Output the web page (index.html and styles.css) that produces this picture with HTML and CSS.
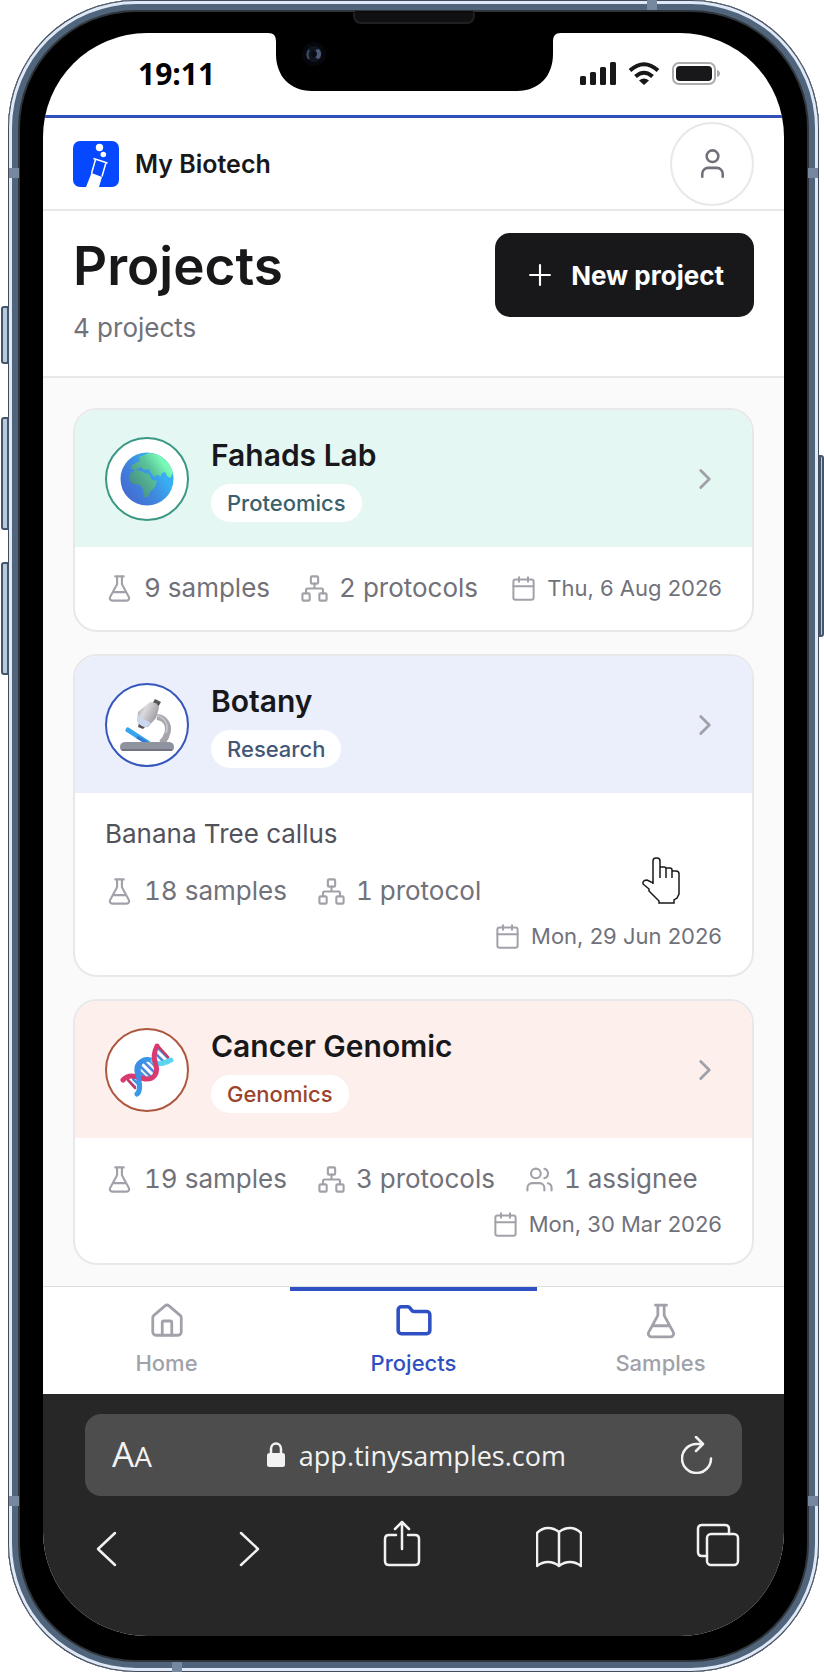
FILE: index.html
```html
<!DOCTYPE html>
<html lang="en">
<head>
<meta charset="utf-8">
<meta name="viewport" content="width=device-width, initial-scale=1">
<title>My Biotech – Projects</title>
<link rel="stylesheet" href="styles.css">
</head>
<body>
<svg class="sprite" aria-hidden="true">
  <symbol id="flask" viewBox="0 0 24 24"><path d="M14 2v6a2 2 0 0 0 .245.96l5.51 10.08A2 2 0 0 1 18 22H6a2 2 0 0 1-1.755-2.96l5.51-10.08A2 2 0 0 0 10 8V2M6.453 15h11.094M8.5 2h7"/></symbol>
  <symbol id="network" viewBox="0 0 24 24"><rect x="16" y="16" width="6" height="6" rx="1"/><rect x="2" y="16" width="6" height="6" rx="1"/><rect x="9" y="2" width="6" height="6" rx="1"/><path d="M5 16v-3a1 1 0 0 1 1-1h12a1 1 0 0 1 1 1v3M12 12V8"/></symbol>
  <symbol id="calendar" viewBox="0 0 24 24"><rect x="3" y="4" width="18" height="18" rx="2"/><path d="M8 2v4M16 2v4M3 10h18"/></symbol>
  <symbol id="users" viewBox="0 0 24 24"><circle cx="9" cy="7" r="4"/><path d="M16 21v-2a4 4 0 0 0-4-4H6a4 4 0 0 0-4 4v2M22 21v-2a4 4 0 0 0-3-3.87M16 3.13a4 4 0 0 1 0 7.75"/></symbol>
  <symbol id="chevron" viewBox="0 0 24 24"><path d="m9 18 6-6-6-6"/></symbol>
</svg>

<div class="phone">
  <span class="side-key key-mute"></span>
  <span class="side-key key-up"></span>
  <span class="side-key key-down"></span>
  <span class="side-key key-power"></span>
  <span class="band band-left-top"></span>
  <span class="band band-right-top"></span>
  <span class="band band-left-bottom"></span>
  <span class="band band-right-bottom"></span>
  <span class="band band-top"></span>
  <span class="band band-bottom"></span>
  <span class="speaker"></span>

  <div class="screen">
    <svg class="notch" viewBox="0 0 293 58" aria-hidden="true">
      <path d="M0 0C6 0 8 3 8 9v12c0 22 14 37 36 37h205c22 0 36-15 36-37V9c0-6 2-9 8-9z"/>
      <circle cx="46" cy="21" r="12" fill="#06070c"/>
      <circle cx="46" cy="21" r="8" fill="#10141f"/>
      <path d="M41 17c-2 3-2 6 0 9" fill="none" stroke="#3c4c66" stroke-width="2"/>
      <ellipse cx="50" cy="21" rx="3" ry="5" fill="#4a5a78"/>
      <circle cx="46" cy="21" r="3" fill="#0a0c14"/>
    </svg>

    <div class="status">
      <span class="clock">19:11</span>
      <div class="signals">
        <svg width="36" height="24" viewBox="0 0 36 24" fill="#18181b" aria-hidden="true"><rect x="0" y="14" width="6" height="9" rx="1.5"/><rect x="10" y="10" width="6" height="13" rx="1.5"/><rect x="20" y="5" width="6" height="18" rx="1.5"/><rect x="30" y="0" width="6" height="23" rx="1.5"/></svg>
        <svg width="32" height="24" viewBox="0 0 32 24" fill="none" stroke="#18181b" stroke-width="4" aria-hidden="true"><path d="M2 8.500Q16-4 30 8.500M7.500 14.500Q16 7 24.500 14.500"/><path d="M11 18.500q5-4 10 0L16 23z" fill="#18181b" stroke="none"/></svg>
        <svg width="48" height="24" viewBox="0 0 48 24" aria-hidden="true"><rect x="1" y="1" width="42" height="21" rx="6" fill="#fff" stroke="#adadb0" stroke-width="2"/><rect x="4" y="4" width="36" height="15" rx="4" fill="#18181b"/><path d="M45 8q3 1 3 3.500T45 15z" fill="#adadb0"/></svg>
      </div>
    </div>

    <header class="topbar">
      <a class="brand" href="#">
        <svg width="46" height="46" viewBox="0 0 46 46" aria-hidden="true">
          <rect width="46" height="46" rx="7" fill="#0548ff"/>
          <circle cx="26.500" cy="6.500" r="3.700" fill="#fff"/><circle cx="30.300" cy="13.500" r="2.800" fill="#fff"/>
          <path d="M20.500 17.500l14 4.500M22.500 18.500l-4 14M33 21.500l-4 14" fill="none" stroke="#fff" stroke-width="1.500"/>
          <path d="M18.500 32l10.500 4-3 10H13z" fill="#fff"/>
        </svg>
        <span>My Biotech</span>
      </a>
      <button class="profile" type="button" aria-label="Account">
        <svg class="icon" width="35" height="35" viewBox="0 0 24 24"><circle cx="12" cy="7" r="4"/><path d="M19 21v-2a4 4 0 0 0-4-4H9a4 4 0 0 0-4 4v2"/></svg>
      </button>
    </header>

    <section class="page-head">
      <div>
        <h1>Projects</h1>
        <p>4 projects</p>
      </div>
      <button class="new-project" type="button">
        <svg class="icon" width="34" height="34" viewBox="0 0 24 24"><path d="M5 12h14M12 5v14"/></svg>
        <span>New project</span>
      </button>
    </section>

    <main class="list">
      <article class="card teal">
        <a class="card-head" href="#">
          <span class="avatar">
            <svg width="54" height="54" viewBox="0 0 54 54" aria-hidden="true">
              <defs>
                <linearGradient id="sea" x1="0" y1="1" x2="1" y2="0.300"><stop offset="0" stop-color="#4560cc"/><stop offset="0.500" stop-color="#3f86de"/><stop offset="0.800" stop-color="#38aff2"/></linearGradient>
                <linearGradient id="land" x1="0" y1="0.700" x2="1" y2="0"><stop offset="0" stop-color="#458c82"/><stop offset="0.500" stop-color="#5cc59b"/><stop offset="0.750" stop-color="#79f9b6"/></linearGradient>
              </defs>
              <circle cx="27" cy="27" r="26.500" fill="url(#sea)"/>
              <path d="M24 3l5-2c12 0 21 9 24 20l-3 5-3-2-2-4-3 1-1 3-4-1-3 2-3-4-2-4-5 1-3-3-5 3-5-1 1-4 6-3 2-2-1-3zM10 22l5-4 6 1 4 2 4 1 3 6 5 1-2 6-5 5-2 5-4 0-1-7-3-5-7-1-4-4z" fill="url(#land)"/>
            </svg>
          </span>
          <span class="heading"><strong>Fahads Lab</strong><em>Proteomics</em></span>
          <svg class="icon go" width="34" height="34"><use href="#chevron"/></svg>
        </a>
        <div class="card-body">
          <ul class="meta">
            <li><svg class="icon"><use href="#flask"/></svg>9 samples</li>
            <li><svg class="icon"><use href="#network"/></svg>2 protocols</li>
            <li class="date"><svg class="icon"><use href="#calendar"/></svg><time datetime="2026-08-06">Thu, 6 Aug 2026</time></li>
          </ul>
        </div>
      </article>

      <article class="card blue">
        <a class="card-head" href="#">
          <span class="avatar">
            <svg width="54" height="54" viewBox="0 0 54 54" aria-hidden="true">
              <defs><linearGradient id="tube" x1="0" y1="0" x2="1" y2="0.600"><stop offset="0" stop-color="#8f8d92"/><stop offset="0.400" stop-color="#dcdadd"/><stop offset="1" stop-color="#96949a"/></linearGradient></defs>
              <path d="M37 19c9 1 13 9 10 17-1 4-3 7-6 9" fill="none" stroke="#a7a5ab" stroke-width="6"/>
              <path d="M37 18c8 1 12 9 9 17" fill="none" stroke="#c5c3c8" stroke-width="2"/>
              <path d="M8 32l20 13" stroke="#38a6ee" stroke-width="5" stroke-linecap="round"/>
              <path d="M17 39l12 7" stroke="#3478d5" stroke-width="3"/>
              <path d="M35 1l6 3-3 5-6-3zM19 25l7 3-3 3-5-2z" fill="#565459"/>
              <path d="M30 4q8 0 9 6l-3 10-8 9q-7 1-11-6l1-9z" fill="url(#tube)"/>
              <path d="M18 18l13 7-4 4q-6 0-10-6z" fill="#cbd8ee"/>
              <path d="M0 49q0-5 6-5h42q6 0 6 5 0 4-3 4H3q-3 0-3-4z" fill="#8f929f"/><path d="M2 52h50" stroke="#737580" stroke-width="2"/>
            </svg>
          </span>
          <span class="heading"><strong>Botany</strong><em>Research</em></span>
          <svg class="icon go" width="34" height="34"><use href="#chevron"/></svg>
        </a>
        <div class="card-body">
          <p class="note">Banana Tree callus</p>
          <ul class="meta">
            <li><svg class="icon"><use href="#flask"/></svg>18 samples</li>
            <li><svg class="icon"><use href="#network"/></svg>1 protocol</li>
            <li class="date"><svg class="icon"><use href="#calendar"/></svg><time datetime="2026-06-29">Mon, 29 Jun 2026</time></li>
          </ul>
        </div>
        <svg class="pointer" width="38" height="48" viewBox="0 0 38 48" aria-hidden="true"><path d="M11 27V4q0-3 3-3h1q3 0 3 3v17M18 10h4q2 0 2 2v9M24 11h4q2 0 2 2v8M30 14h4q3 0 3 3v20l-2 4-3 2v3H17v-2L7 34v-2l-6-5v-2q1-2 4-2l4 2q2 0 2 2" fill="none" stroke="#18181b" stroke-width="1.500"/></svg>
      </article>

      <article class="card coral">
        <a class="card-head" href="#">
          <span class="avatar">
            <svg width="54" height="54" viewBox="0 0 54 54" fill="none" stroke-width="5" stroke-linecap="round" aria-hidden="true">
              <path d="M8 37l7 7M13 36l5 5M23 18l13 13M20 23l11 11M19 28l7 7M28 16l10 10M39 6l9 9M36 11l7 7" stroke="#4b8de0" stroke-width="2.500"/>
              <path d="M39 4l9 10M8 37l7 8" stroke="#c8385f" stroke-width="2.500"/>
              <path d="M17 51c7-6-3-22 3-31 5-6 12-3 15-1" stroke="#3a98e8"/>
              <path d="M33 18c6 5 11 2 18-1" stroke="#5fd4f0"/>
              <path d="M3 37c7-8 16-2 22-1 9 1 13-6 11-13-3-9-2-14 1-20" stroke="#d93a72"/>
              <path d="M19 35c-3-7-3-13 2-16" stroke="#3f8fe6"/>
            </svg>
          </span>
          <span class="heading"><strong>Cancer Genomic</strong><em>Genomics</em></span>
          <svg class="icon go" width="34" height="34"><use href="#chevron"/></svg>
        </a>
        <div class="card-body">
          <ul class="meta">
            <li><svg class="icon"><use href="#flask"/></svg>19 samples</li>
            <li><svg class="icon"><use href="#network"/></svg>3 protocols</li>
            <li><svg class="icon"><use href="#users"/></svg>1 assignee</li>
            <li class="date"><svg class="icon"><use href="#calendar"/></svg><time datetime="2026-03-30">Mon, 30 Mar 2026</time></li>
          </ul>
        </div>
      </article>
    </main>

    <nav class="tabs" aria-label="Main">
      <a href="#"><svg class="icon" width="38" height="38" viewBox="0 0 24 24"><path d="M15 21v-8a1 1 0 0 0-1-1h-4a1 1 0 0 0-1 1v8"/><path d="M3 10a2 2 0 0 1 .709-1.528l7-5.999a2 2 0 0 1 2.582 0l7 5.999A2 2 0 0 1 21 10v9a2 2 0 0 1-2 2H5a2 2 0 0 1-2-2z"/></svg>Home</a>
      <a href="#" class="active" aria-current="page"><svg class="icon" width="38" height="38" viewBox="0 0 24 24"><path d="M20 20a2 2 0 0 0 2-2V8a2 2 0 0 0-2-2h-7.900a2 2 0 0 1-1.690-.900L9.600 3.900A2 2 0 0 0 7.930 3H4a2 2 0 0 0-2 2v13a2 2 0 0 0 2 2Z"/></svg>Projects</a>
      <a href="#"><svg class="icon" width="38" height="38"><use href="#flask"/></svg>Samples</a>
    </nav>

    <footer class="browser">
      <div class="address">
        <button class="text-size" type="button" aria-label="Text size"><span>A</span><small>A</small></button>
        <span class="url">
          <svg width="18" height="26" viewBox="0 0 18 26" aria-hidden="true"><rect x="0" y="11" width="18" height="14" rx="2.500" fill="#f2f2f2"/><path d="M4 12V7a5 5.500 0 0 1 10 0v5" fill="none" stroke="#f2f2f2" stroke-width="2.500"/></svg>
          app.tinysamples.com
        </span>
        <button type="button" aria-label="Reload"><svg class="icon" width="32" height="38" viewBox="0 0 32 38"><path d="M30 22.500A14.500 14.500 0 1 1 15.500 8H22M15 1l7 7-7 7"/></svg></button>
      </div>
      <div class="toolbar">
        <button type="button" aria-label="Back"><svg class="icon" width="28" height="48" viewBox="0 0 28 48"><path d="M22 13L5 29l17 16"/></svg></button>
        <button type="button" aria-label="Forward"><svg class="icon" width="28" height="48" viewBox="0 0 28 48"><path d="M6 13l17 16L6 45"/></svg></button>
        <button type="button" aria-label="Share"><svg class="icon" width="44" height="48" viewBox="0 0 44 48"><path d="M18 15h-7q-4 0-4 4v22q0 4 4 4h26q4 0 4-4V19q0-4-4-4h-7M24 29V2M17 9l7-7 7 7"/></svg></button>
        <button type="button" aria-label="Bookmarks"><svg class="icon" width="46" height="48" viewBox="0 0 46 48"><path d="M23 46V12Q18 8 12 8T1 13v33q5-4 11-4t11 4q5-4 11-4t11 4V13q-5-5-11-5T23 12"/></svg></button>
        <button type="button" aria-label="Tabs"><svg class="icon" width="44" height="48" viewBox="0 0 44 48"><rect x="11" y="14" width="31" height="31" rx="4"/><path d="M11 36H6q-4 0-4-4V9q0-4 4-4h23q4 0 4 4v5"/></svg></button>
      </div>
    </footer>
  </div>
</div>
</body>
</html>
```

FILE: styles.css
```css
* { box-sizing: border-box; }

body {
  margin: 0;
  padding: 0 5px 0 8px;
  background: #fff;
  color: #18181b;
  font-family: Inter, "Liberation Sans", sans-serif;
  font-size: 26px;
}

h1, p, ul { margin: 0; padding: 0; }
a { color: inherit; text-decoration: none; }
button { margin: 0; padding: 0; border: 0; background: none; color: inherit; font: inherit; }
svg { display: block; flex: none; }
.sprite { position: absolute; width: 0; height: 0; }
.icon { fill: none; stroke: currentColor; stroke-width: 1.75; stroke-linecap: round; stroke-linejoin: round; }

/* Device */
.phone {
  position: relative;
  padding: 33px 35px 36px;
  border-radius: 128px;
  background: #000;
  box-shadow: inset 0 0 0 1px #424b59, inset 0 0 0 4px #dfe8f7, inset 0 0 0 10px #50657c, inset 0 0 0 12px #30353c;
}
.side-key {
  position: absolute;
  left: -7px;
  width: 8px;
  border: 2px solid #43566b;
  border-radius: 3px 0 0 3px;
  background: #b9c9d8;
}
.key-mute { top: 306px; height: 58px; }
.key-up { top: 417px; height: 113px; }
.key-down { top: 562px; height: 113px; }
.key-power { top: 455px; right: -5px; left: auto; width: 5px; height: 182px; border-radius: 0 3px 3px 0; }
.band { position: absolute; width: 10px; height: 10px; background: #7688a0; }
.band-left-top { top: 168px; left: 1px; }
.band-right-top { top: 168px; right: 1px; }
.band-left-bottom { bottom: 166px; left: 1px; }
.band-right-bottom { bottom: 166px; right: 1px; }
.band-top { top: 0; right: 162px; }
.band-bottom { bottom: 0; left: 164px; }
.speaker {
  position: absolute;
  top: 11px;
  left: 50%;
  width: 122px;
  height: 13px;
  margin-left: -61px;
  border: 2px solid #202022;
  border-top-color: #0c0c0e;
  border-radius: 4px 4px 8px 8px;
  background: #101012;
}
.screen { position: relative; overflow: hidden; border-radius: 104px; background: #fff; }
.notch { position: absolute; top: 0; left: 50%; width: 293px; height: 58px; margin-left: -146px; }

.status {
  display: flex;
  align-items: center;
  justify-content: space-between;
  height: 85px;
  padding: 0 64px 0 95px;
  border-bottom: 3px solid #2f4fbb;
}
.clock { color: #000; font: bold 30px/40px "Open Sans", sans-serif; }
.signals { display: flex; gap: 12px; }

/* App header */
.topbar {
  display: flex;
  align-items: center;
  justify-content: space-between;
  height: 93px;
  padding: 0 30px;
  border-bottom: 2px solid #e8e8ea;
}
.brand { display: flex; align-items: center; gap: 16px; font-size: 25px; font-weight: 600; }
.profile {
  display: grid;
  place-items: center;
  width: 84px;
  height: 84px;
  border: 2px solid #e8e8ea;
  border-radius: 50%;
  color: #71717a;
}

.page-head {
  display: flex;
  align-items: flex-start;
  justify-content: space-between;
  padding: 22px 30px 29px;
  border-bottom: 2px solid #e8e8ea;
}
.page-head h1 { font-size: 53px; font-weight: 600; line-height: 66px; }
.page-head p { margin-top: 10px; color: #71717a; line-height: 38px; }
.new-project {
  display: flex;
  align-items: center;
  gap: 14px;
  height: 84px;
  padding: 0 30px 0 28px;
  border-radius: 15px;
  background: #18181b;
  color: #fff;
  font-weight: 700;
}
.new-project .icon { stroke-width: 1.5; }

/* Project cards */
.list { display: flex; flex-direction: column; gap: 22px; padding: 30px 30px 21px; background: #fafafa; }
.card { position: relative; overflow: hidden; border: 2px solid #e8e8ea; border-radius: 24px; background: #fff; }
.card-head { display: flex; align-items: center; gap: 22px; padding: 26px 30px 25px; background: var(--tint); }
.avatar {
  display: grid;
  flex: none;
  place-items: center;
  width: 84px;
  height: 84px;
  border: 2px solid var(--ring);
  border-radius: 50%;
  background: #fff;
}
.heading { display: flex; flex: 1; flex-direction: column; align-items: flex-start; gap: 10px; }
.heading strong { font-size: 30px; font-weight: 600; line-height: 38px; }
.heading em {
  padding: 0 16px;
  border-radius: 19px;
  background: #fff;
  color: var(--label);
  font-size: 22px;
  font-style: normal;
  font-weight: 500;
  line-height: 38px;
}
.go { color: #a1a1aa; stroke-width: 2; }
.teal { --tint: #e4f7f3; --ring: #3a9884; --label: #3b616c; }
.blue { --tint: #ebeffc; --ring: #3556bd; --label: #435777; }
.coral { --tint: #fdefeb; --ring: #ac5840; --label: #9b442d; }

.card-body { padding: 24px 30px 25px; }
.note { margin-bottom: 23px; color: #52525b; line-height: 34px; }
.meta { display: flex; flex-wrap: wrap; align-items: center; gap: 14px 30px; list-style: none; color: #71717a; font-variant-numeric: tabular-nums; }
.meta li { display: flex; align-items: center; gap: 10px; line-height: 34px; }
.meta .icon { width: 29px; height: 29px; color: #a1a1aa; }
.meta .date { margin-left: auto; font-size: 22px; font-variant-numeric: normal; line-height: 28px; }
.meta .date .icon { width: 27px; height: 27px; }
.pointer { position: absolute; right: 72px; bottom: 70px; }

/* Bottom navigation */
.tabs { display: grid; grid-template-columns: repeat(3, 1fr); border-top: 1px solid #dededf; }
.tabs a {
  display: flex;
  flex-direction: column;
  align-items: center;
  gap: 8px;
  padding: 11px 0 16px;
  border-top: 4px solid transparent;
  color: #a1a1aa;
  font-size: 22px;
  font-weight: 500;
  line-height: 30px;
}
.tabs .active { border-color: #2f50c2; color: #2f50c2; }
.tabs .active .icon { stroke-width: 2.25; }

/* Browser chrome */
.browser { padding: 20px 42px 68px; background: #272727; color: #f2f2f2; }
.browser .icon { stroke-width: 2.5; }
.address {
  display: flex;
  align-items: center;
  justify-content: space-between;
  height: 82px;
  padding: 0 29px 0 27px;
  border-radius: 16px;
  background: #4d4d4d;
  font-family: "Open Sans", sans-serif;
}
.text-size { font-size: 35px; line-height: 40px; }
.text-size small { font-size: 28px; }
.url { display: flex; align-items: center; gap: 14px; font-size: 27px; }
.toolbar { display: flex; justify-content: space-between; margin-top: 24px; padding: 0 2px 0 8px; }
```
